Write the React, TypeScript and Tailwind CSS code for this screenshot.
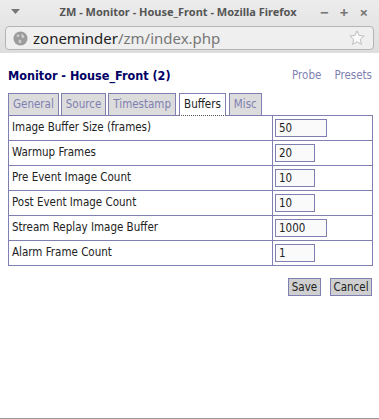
const rows = [
  { label: "Image Buffer Size (frames)", value: "50", wide: true },
  { label: "Warmup Frames", value: "20", wide: false },
  { label: "Pre Event Image Count", value: "10", wide: false },
  { label: "Post Event Image Count", value: "10", wide: false },
  { label: "Stream Replay Image Buffer", value: "1000", wide: true },
  { label: "Alarm Frame Count", value: "1", wide: false },
];

const tabs = ["General", "Source", "Timestamp", "Buffers", "Misc"];

const App = () => {
  return (
    <div className="w-[379px] h-[419px] flex flex-col bg-white overflow-hidden border-b border-[#9a9a9a]">
      {/* window chrome */}
      <div className="bg-gradient-to-b from-[#ececec] to-[#dedede] font-['Noto_Sans',sans-serif]">
        <div className="h-[24px] flex items-center px-[11px] text-[#666]">
          <svg width="9" height="6" viewBox="0 0 9 6" className="mr-[26px]">
            <path d="M0 0 L9 0 L4.5 5 Z" fill="#777" />
          </svg>
          <div className="flex-1 text-center text-[11px] font-bold text-[#555] -ml-[10px]">
            ZM - Monitor - House_Front - Mozilla Firefox
          </div>
          <div className="flex items-center gap-[11px] text-[#777] text-[15px] font-bold">
            <span>−</span>
            <span>+</span>
            <span>×</span>
          </div>
        </div>
        <div className="px-[5px] pb-[3px] pt-[2px]">
          <div className="h-[24px] rounded-[4px] border border-[#b4b4b4] bg-[#efefef] flex items-center px-[7px]">
            <svg width="15" height="15" viewBox="0 0 16 16" className="mr-[5px]">
              <circle cx="8" cy="8" r="7.5" fill="#9c9c9c" />
              <path d="M4 4 Q6 3 7 5 Q6 7 4 6 Z M9 3 Q12 4 12 7 Q10 8 9 6 Z M6 9 Q9 9 9 12 Q7 14 6 12 Z" fill="#cfcfcf" />
            </svg>
            <span className="text-[15px] text-[#222]">zoneminder</span>
            <span className="text-[15px] text-[#777]">/zm/index.php</span>
            <div className="flex-1" />
            <svg width="18" height="18" viewBox="0 0 24 24">
              <path
                d="M12 2.5 L14.8 8.6 L21.5 9.3 L16.5 13.8 L17.9 20.5 L12 17.1 L6.1 20.5 L7.5 13.8 L2.5 9.3 L9.2 8.6 Z"
                fill="#fafafa"
                stroke="#b8b8b8"
                strokeWidth="1.2"
                strokeLinejoin="round"
              />
            </svg>
          </div>
        </div>
      </div>

      {/* page */}
      <div className="px-[8px] font-['DejaVu_Sans_Condensed','DejaVu_Sans',sans-serif] font-stretch-condensed">
        <div className="flex items-center justify-between mt-[15px] h-[16px]">
          <div className="text-[12.5px] font-bold text-[#000066]">Monitor - House_Front (2)</div>
          <div className="flex gap-[13px] text-[11.5px] text-[#7f7fb2] -mr-[1px]">
            <span>Probe</span>
            <span>Presets</span>
          </div>
        </div>

        <div className="flex items-end gap-[2px] mt-[9px] h-[22px] text-[11.5px]">
          {tabs.map((t) => {
            const active = t === "Buffers";
            return (
              <div
                key={t}
                className={
                  active
                    ? "relative z-10 -mb-px h-[23px] px-[4px] border border-[#7f7fb2] border-b-[#555] [border-bottom-style:dotted] bg-white text-[#222] flex items-center ml-[1px] mr-[1px]"
                    : "h-[22px] px-[4px] border border-b-0 border-[#7f7fb2] bg-[#dcdcdc] text-[#7f7fb2] flex items-center"
                }
              >
                {t}
              </div>
            );
          })}
        </div>

        <table className="w-[365px] border-collapse text-[11.5px] text-[#222]">
          <tbody>
            {rows.map((r) => (
              <tr key={r.label} className="h-[25px]">
                <td className="w-[264px] border border-[#7f7fb2] pl-[3px] py-0">{r.label}</td>
                <td className="border border-[#7f7fb2] pl-[2px] py-0">
                  <div
                    className={
                      r.wide
                        ? "w-[52px] h-[18px] border border-[#7f7fb2] bg-[#fafafa] pl-[3px] leading-[16px]"
                        : "w-[40px] h-[18px] border border-[#7f7fb2] bg-[#fafafa] pl-[3px] leading-[16px]"
                    }
                  >
                    {r.value}
                  </div>
                </td>
              </tr>
            ))}
          </tbody>
        </table>

        <div className="flex justify-end gap-[9px] mt-[12px] -mr-[1px]">
          <button className="w-[33px] h-[18px] border border-[#7f7fb2] bg-[#cfcfcf] text-[11.5px] text-[#222] leading-[16px]">
            Save
          </button>
          <button className="w-[42px] h-[18px] border border-[#7f7fb2] bg-[#cfcfcf] text-[11.5px] text-[#222] leading-[16px]">
            Cancel
          </button>
        </div>
      </div>
    </div>
  );
};

export default App;
